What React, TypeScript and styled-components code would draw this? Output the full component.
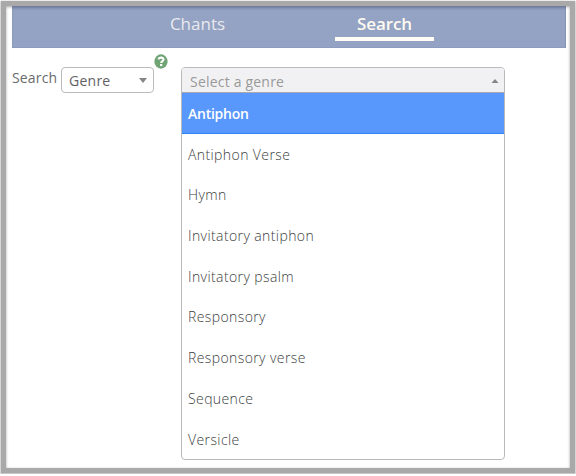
import React from "react";
import styled, { createGlobalStyle } from "styled-components";

const Global = createGlobalStyle`
  * { box-sizing: border-box; }
  body { margin: 0; background: #fff; font-family: "Open Sans", sans-serif; }
`;

const Frame = styled.main`
  width: 574px;
  height: 472px;
  margin: 1px;
  border: 5px solid #a9a9a9;
  box-shadow: 0 1px 2px 1px rgba(0, 0, 0, 0.24), inset 0 1px 3px rgba(0, 0, 0, 0.35);
  color: #58595b;
  font-size: 14px;
  font-weight: 300;
`;

const Nav = styled.nav`
  display: flex;
  width: 554px;
  height: 42px;
  margin-left: 6px;
  padding-left: 136px;
  background: #94a3c3;
  box-shadow: inset 0 3px 3px -1px rgba(50, 60, 85, 0.4), inset -1px -1px 0 #8c9bbf;
`;

const Tab = styled.a<{ $active?: boolean }>`
  width: 99px;
  height: 35px;
  margin-right: ${(p) => (p.$active ? 0 : 88)}px;
  border-bottom: 4px solid ${(p) => (p.$active ? "#fffdf6" : "transparent")};
  color: ${(p) => (p.$active ? "#fffaf0" : "#e9eaee")};
  font-size: 17px;
  font-weight: ${(p) => (p.$active ? 600 : 400)};
  letter-spacing: ${(p) => (p.$active ? -0.1 : 0)}px;
  line-height: 35px;
  text-align: center;
`;

const Form = styled.section`
  display: flex;
  align-items: flex-start;
  margin-left: 6px;
  padding-top: 19px;
`;

const Label = styled.label`
  width: 49px;
  line-height: 22px;
  letter-spacing: 0.15px;
  font-weight: 400;
  color: #696b6d;
`;

const Select = styled.button`
  display: flex;
  align-items: center;
  justify-content: space-between;
  width: 93px;
  height: 26px;
  padding: 1px 6px 0 7px;
  border: 1px solid #bbb;
  border-radius: 4px;
  background: #fff;
  color: #5f6163;
  font: 400 14px "Open Sans", sans-serif;
  letter-spacing: 0.25px;
`;

const Help = styled.svg`
  width: 14px;
  height: 15px;
  margin: -13px 13px 0 0;
`;

const Dropdown = styled.div`
  width: 324px;
  height: 393px;
  border: 1px solid #bababa;
  border-radius: 4px;
  background: #fff;
  overflow: hidden;
`;

const Field = styled.div`
  display: flex;
  align-items: center;
  justify-content: space-between;
  height: 25px;
  padding: 1px 5px 0 8px;
  background: #f1f1f3;
  box-shadow: inset 0 -1px #aaa9b0;
  color: #999;
  font-weight: 400;
  letter-spacing: 0.2px;
`;

const Caret = styled.svg`
  width: 8px;
  height: 6px;
  fill: #858585;
`;

const List = styled.ul`
  margin: 0;
  padding: 0;
  list-style: none;
`;

const Option = styled.li<{ $selected?: boolean }>`
  height: 40.7px;
  padding-left: 6px;
  line-height: 41px;
  letter-spacing: ${(p) => (p.$selected ? -0.25 : 0.4)}px;
  color: ${(p) => (p.$selected ? "#fff" : "#3c3e40")};
  font-weight: ${(p) => (p.$selected ? 600 : 300)};
  background: ${(p) => (p.$selected ? "#5897fb" : "transparent")};
  box-shadow: ${(p) => (p.$selected ? "inset 0 -1px #2e86f5" : "none")};
`;

const options = [
  "Antiphon",
  "Antiphon Verse",
  "Hymn",
  "Invitatory antiphon",
  "Invitatory psalm",
  "Responsory",
  "Responsory verse",
  "Sequence",
  "Versicle",
];

export default function App() {
  return (
    <>
      <Global />
      <Frame>
        <Nav>
          <Tab>Chants</Tab>
          <Tab $active>Search</Tab>
        </Nav>
        <Form>
          <Label>Search</Label>
          <Select>
            Genre
            <Caret viewBox="0 0 8 6"><path d="M0 0h8L4 5z" /></Caret>
          </Select>
          <Help viewBox="0 0 14 15">
            <ellipse cx="7" cy="7.5" rx="6.6" ry="7.2" fill="#71a475" />
            <path d="M4.6 5.4C4.9 3.2 9.5 2.9 9.5 5.6 9.5 7.3 7.2 7 7.2 9" fill="none" stroke="#fff" strokeWidth="2.1" />
            <path d="M6.1 10h2.2v2.1H6.1z" fill="#fff" />
          </Help>
          <Dropdown>
            <Field>
              Select a genre
              <Caret viewBox="0 0 8 6"><path d="M.5 5h7L4 1z" /></Caret>
            </Field>
            <List>
              {options.map((name, index) => (
                <Option key={name} $selected={index === 0}>
                  {name}
                </Option>
              ))}
            </List>
          </Dropdown>
        </Form>
      </Frame>
    </>
  );
}
